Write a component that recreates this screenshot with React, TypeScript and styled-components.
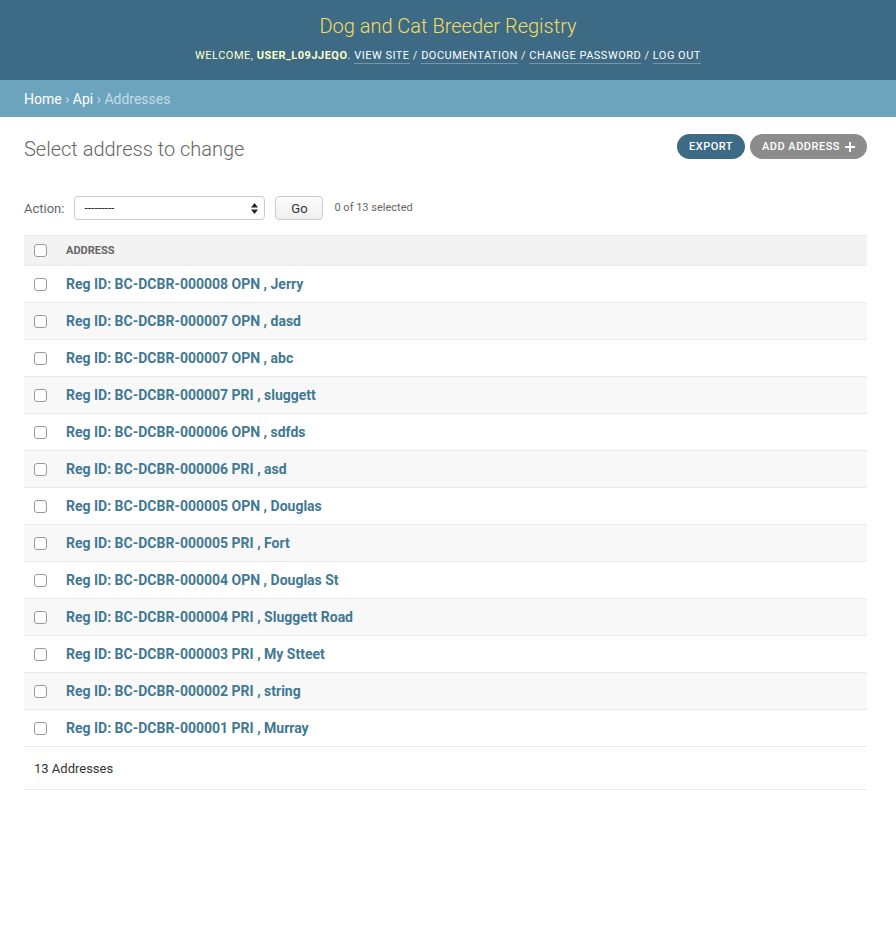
import React from "react";
import styled, { createGlobalStyle } from "styled-components";

const Global = createGlobalStyle`
  html, body { margin: 0; padding: 0; background: #fff; }
  body { font-family: Roboto, "Liberation Sans", Arial, sans-serif; color: #333; font-size: 14px; }
  * { box-sizing: border-box; }
`;

const Header = styled.header`
  height: 80px;
  background: #3d6a84;
  display: flex;
  flex-direction: column;
  align-items: center;
  padding-top: 14px;
`;

const Branding = styled.h1`
  margin: 0;
  font-size: 20px;
  line-height: 24px;
  font-weight: 300;
  color: #f5dd5d;
`;

const UserTools = styled.div`
  margin-top: 11px;
  font-size: 11px;
  line-height: 14px;
  letter-spacing: 0.5px;
  text-transform: uppercase;
  color: #ffc;
`;

const Strong = styled.strong`
  font-weight: 700;
`;

const ToolLink = styled.a`
  color: #fff;
  text-decoration: none;
  border-bottom: 1px solid rgba(255, 255, 255, 0.3);
  padding-bottom: 1px;
`;

const Breadcrumbs = styled.nav`
  background: #6ca4be;
  padding: 11px 24px 9px;
  font-size: 14px;
  line-height: 17px;
  color: #c4dce8;
`;

const Crumb = styled.a`
  color: #fff;
  text-decoration: none;
`;

const Content = styled.main`
  padding: 17px 29px 0 24px;
`;

const TitleRow = styled.div`
  display: flex;
  justify-content: space-between;
  align-items: flex-start;
`;

const Title = styled.h1`
  margin: 3px 0 0;
  font-size: 20px;
  line-height: 24px;
  font-weight: 300;
  color: #666;
`;

const ObjectTools = styled.div`
  display: flex;
  gap: 5px;
`;

const Pill = styled.a<{ $tone: "primary" | "muted" }>`
  display: flex;
  align-items: center;
  gap: 5px;
  height: 25px;
  padding: 0 12px;
  border-radius: 13px;
  background: ${(p) => (p.$tone === "primary" ? "#3d6a84" : "#8c8c8c")};
  color: #fff;
  font-size: 11px;
  font-weight: 500;
  letter-spacing: 0.5px;
  text-transform: uppercase;
  text-decoration: none;
`;

const Actions = styled.div`
  display: flex;
  align-items: center;
  margin-top: 35px;
  height: 24px;
  font-size: 13px;
  color: #666;
`;

const ActionLabel = styled.label`
  margin-right: 10px;
`;

const Select = styled.div`
  position: relative;
  width: 191px;
  height: 24px;
  border: 1px solid #ccc;
  border-radius: 4px;
  background: #fff;
  color: #333;
  font-size: 12px;
  line-height: 22px;
  padding-left: 9px;
`;

const SelectArrows = styled.svg`
  position: absolute;
  right: 6px;
  top: 6px;
`;

const GoButton = styled.button`
  margin-left: 10px;
  width: 48px;
  height: 24px;
  border: 1px solid #ccc;
  border-radius: 4px;
  background: linear-gradient(#fcfcfc, #efefef);
  font-family: inherit;
  font-size: 13px;
  color: #333;
  padding: 0;
`;

const Counter = styled.span`
  margin-left: 11px;
  font-size: 11px;
  color: #666;
  margin-top: -1px;
`;

const Table = styled.div`
  margin-top: 15px;
  display: flex;
  flex-direction: column;
`;

const Row = styled.div<{ $variant: "head" | "odd" | "even" }>`
  display: flex;
  align-items: center;
  height: ${(p) => (p.$variant === "head" ? "31px" : "37px")};
  background: ${(p) =>
    p.$variant === "head" ? "#f3f3f3" : p.$variant === "even" ? "#f8f8f8" : "#fff"};
  border-top: ${(p) => (p.$variant === "head" ? "1px solid #eaeaea" : "none")};
  border-bottom: 1px solid #eaeaea;
`;

const CheckCell = styled.div`
  width: 42px;
  display: flex;
  align-items: center;
  padding-left: 10px;
`;

const Check = styled.input`
  appearance: none;
  margin: 0;
  width: 13px;
  height: 13px;
  border: 1px solid #9a9a9a;
  border-radius: 3px;
  background: #fff;
`;

const HeadLabel = styled.span`
  font-size: 11px;
  font-weight: 700;
  color: #666;
  text-transform: uppercase;
`;

const RowLink = styled.a`
  font-size: 14px;
  font-weight: 700;
  color: #417893;
  text-decoration: none;
`;

const Paginator = styled.div`
  height: 43px;
  display: flex;
  align-items: center;
  padding-left: 10px;
  font-size: 13px;
  color: #333;
  border-bottom: 1px solid #eaeaea;
`;

const rows = [
  "Reg ID: BC-DCBR-000008 OPN , Jerry",
  "Reg ID: BC-DCBR-000007 OPN , dasd",
  "Reg ID: BC-DCBR-000007 OPN , abc",
  "Reg ID: BC-DCBR-000007 PRI , sluggett",
  "Reg ID: BC-DCBR-000006 OPN , sdfds",
  "Reg ID: BC-DCBR-000006 PRI , asd",
  "Reg ID: BC-DCBR-000005 OPN , Douglas",
  "Reg ID: BC-DCBR-000005 PRI , Fort",
  "Reg ID: BC-DCBR-000004 OPN , Douglas St",
  "Reg ID: BC-DCBR-000004 PRI , Sluggett Road",
  "Reg ID: BC-DCBR-000003 PRI , My Stteet",
  "Reg ID: BC-DCBR-000002 PRI , string",
  "Reg ID: BC-DCBR-000001 PRI , Murray",
];

export default function App() {
  return (
    <>
      <Global />
      <Header>
        <Branding>Dog and Cat Breeder Registry</Branding>
        <UserTools>
          Welcome, <Strong>user_l09jjeqo</Strong>. <ToolLink href="#">View site</ToolLink> /{" "}
          <ToolLink href="#">Documentation</ToolLink> / <ToolLink href="#">Change password</ToolLink> /{" "}
          <ToolLink href="#">Log out</ToolLink>
        </UserTools>
      </Header>
      <Breadcrumbs>
        <Crumb href="#">Home</Crumb> › <Crumb href="#">Api</Crumb> › Addresses
      </Breadcrumbs>
      <Content>
        <TitleRow>
          <Title>Select address to change</Title>
          <ObjectTools>
            <Pill $tone="primary" href="#">Export</Pill>
            <Pill $tone="muted" href="#">
              Add address
              <svg width="10" height="10" viewBox="0 0 10 10">
                <path d="M4 0h2v4h4v2H6v4H4V6H0V4h4z" fill="#fff" />
              </svg>
            </Pill>
          </ObjectTools>
        </TitleRow>
        <Actions>
          <ActionLabel>Action:</ActionLabel>
          <Select>
            ---------
            <SelectArrows width="7" height="11" viewBox="0 0 7 11">
              <path d="M3.5 0L7 4.5H0z M3.5 11L0 6.5h7z" fill="#222" />
            </SelectArrows>
          </Select>
          <GoButton>Go</GoButton>
          <Counter>0 of 13 selected</Counter>
        </Actions>
        <Table>
          <Row $variant="head">
            <CheckCell>
              <Check type="checkbox" />
            </CheckCell>
            <HeadLabel>Address</HeadLabel>
          </Row>
          {rows.map((r, i) => (
            <Row key={i} $variant={i % 2 === 0 ? "odd" : "even"}>
              <CheckCell>
                <Check type="checkbox" />
              </CheckCell>
              <RowLink href="#">{r}</RowLink>
            </Row>
          ))}
          <Paginator>13 Addresses</Paginator>
        </Table>
      </Content>
    </>
  );
}
